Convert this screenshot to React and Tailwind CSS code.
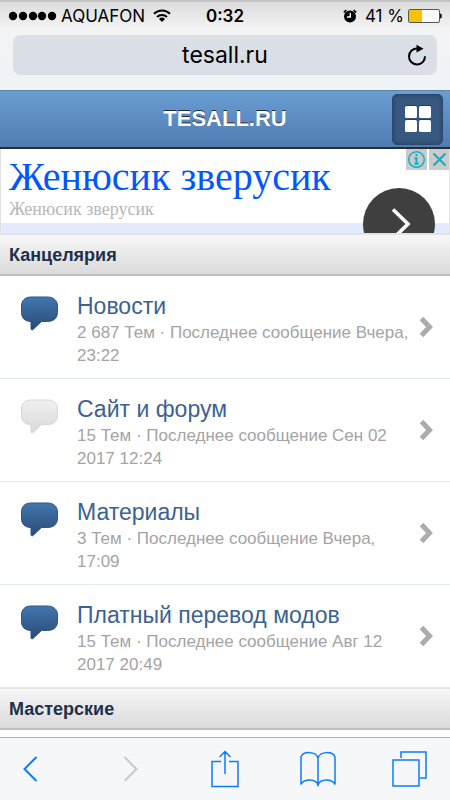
import React from "react";

const forums = [
  {
    title: "Новости",
    info: "2 687 Тем · Последнее сообщение Вчера, 23:22",
    unread: true,
  },
  {
    title: "Сайт и форум",
    info: "15 Тем · Последнее сообщение Сен 02 2017 12:24",
    unread: false,
  },
  {
    title: "Материалы",
    info: "3 Тем · Последнее сообщение Вчера, 17:09",
    unread: true,
  },
  {
    title: "Платный перевод модов",
    info: "15 Тем · Последнее сообщение Авг 12 2017 20:49",
    unread: true,
  },
];

const StatusBar = () => (
  <div className="grid grid-cols-[1fr_auto_1fr] items-center h-7 px-2">
    <div className="flex items-center">
      <svg width="49" height="10" viewBox="0 0 49 10">
        {[5, 15, 25, 34, 44].map((cx) => (
          <circle key={cx} cx={cx} cy="5" r="4.2" />
        ))}
      </svg>
      <span className="ml-1 text-[17px] leading-7">AQUAFON</span>
      <svg className="ml-2" width="18" height="14" viewBox="0 0 18 14" fill="none" stroke="#000" strokeWidth="2">
        <path d="M1 4.8a11.5 11.5 0 0 1 16 0M4 8a7.2 7.2 0 0 1 10 0" />
        <path d="M9 13 6 10a4.4 4.4 0 0 1 6 0z" fill="#000" stroke="none" />
      </svg>
    </div>
    <span className="text-[17px] leading-7 font-semibold">0:32</span>
    <div className="flex items-center justify-end">
      <svg width="14" height="14" viewBox="0 0 14 14">
        <circle cx="7" cy="7.5" r="6" />
        <path d="M0.8 3.4 3.4 1M13.2 3.4 10.6 1" stroke="#000" strokeWidth="1.6" />
        <path d="M7.3 3.8v4.2H4" fill="none" stroke="#fff" strokeWidth="1.3" />
      </svg>
      <span className="ml-2 text-[17px] leading-7 whitespace-nowrap">41 %</span>
      <svg className="ml-1" width="34" height="14" viewBox="0 0 34 14">
        <rect x="0.5" y="0.5" width="31" height="13" rx="1.5" fill="#fafafa" stroke="#555" />
        <rect x="1" y="1" width="13" height="12" fill="#f7c200" />
        <path d="M32 4.5c2.500 0 2.500 5 0 5z" />
      </svg>
    </div>
  </div>
);

const AddressBar = () => (
  <div className="flex items-center mx-[13px] mt-[5px] mb-[15px] h-10 rounded-lg bg-gradient-to-b from-[#dae0e4] to-[#d9dee8]">
    <input
      aria-label="Адрес"
      defaultValue="tesall.ru"
      className="w-full min-w-0 pl-10 bg-transparent text-center text-[23px] leading-8 outline-none"
    />
    <button aria-label="Обновить" className="shrink-0 w-10 flex justify-center">
      <svg width="20" height="22" viewBox="0 0 20 22">
        <path d="M10.5 4.5A8 8 0 1 0 18 12.3" fill="none" stroke="#000" strokeWidth="2" />
        <path d="m9.5 0.8 7 4-7 3.8z" />
      </svg>
    </button>
  </div>
);

const AdBanner = () => (
  <div className="relative h-[85px] overflow-hidden border-x border-b border-[#e2e2e2] bg-white font-['Liberation_Serif',serif]">
    <a href="#ad" className="block pl-2 pt-2">
      <span className="block text-[40px] leading-10 text-[#0057ff] whitespace-nowrap">
        Женюсик зверусик
      </span>
      <span className="block mt-[2px] text-[18px] leading-5 text-[#b8b8b8]">
        Женюсик зверусик
      </span>
    </a>
    <div className="absolute inset-x-0 bottom-0 h-[10px] bg-[#e3eafd]" />
    <button
      aria-label="Далее"
      className="absolute right-[14px] top-[39px] w-[72px] h-[72px] rounded-full bg-[#3f3f3f]"
    >
      <svg width="72" height="72" viewBox="0 0 72 72" fill="none" stroke="#fff" strokeWidth="3.6">
        <path d="m30 21.500 15 14.500-15 14.500" />
      </svg>
    </button>
    <div className="absolute -right-px top-0 flex gap-0.5">
      <button aria-label="О рекламе" className="w-[21px] h-[21px] bg-[#cbcbcb]">
        <svg width="21" height="21" viewBox="0 0 21 21" fill="none" stroke="#0fafca" strokeWidth="1.5">
          <circle cx="10.5" cy="10.5" r="7.8" />
          <path d="M10.5 5v2.2M8.5 9.2h2v5.5M8.5 14.8h4.2" strokeWidth="2" />
        </svg>
      </button>
      <button aria-label="Закрыть" className="w-[21px] h-[21px] bg-[#cbcbcb]">
        <svg width="21" height="21" viewBox="0 0 21 21" stroke="#0fafca" strokeWidth="2">
          <path d="m4.5 4.5 12 12M16.5 4.5l-12 12" />
        </svg>
      </button>
    </div>
  </div>
);

const SectionTitle = ({ children }) => (
  <h2 className="h-[42px] px-[9px] border-t border-b-2 border-t-[#e4e4e4] border-b-[#bfbfbf] bg-gradient-to-b from-[#f7f7f7] to-[#dadada] text-[18px] leading-10 font-bold text-[#1d3049]">
    {children}
  </h2>
);

const Bubble = ({ unread }) => (
  <svg className="shrink-0 mt-5" width="38" height="35" viewBox="0 0 38 35">
    <defs>
      <linearGradient id="bubble-on" x1="0" y1="0" x2="0" y2="1">
        <stop offset="0" stopColor="#4277ad" />
        <stop offset="1" stopColor="#2a4a78" />
      </linearGradient>
      <linearGradient id="bubble-off" x1="0" y1="0" x2="0" y2="1">
        <stop offset="0" stopColor="#f0f0f0" />
        <stop offset="1" stopColor="#d9d9d9" />
      </linearGradient>
    </defs>
    <path
      d="M11 1h16.500C34 1 37.500 5 37.500 10v6.500c0 5-3.500 9-10 9h-6L13 33.500c-1 .8-2 .4-2-1v-7C4.500 25.500 1.500 21.500 1.500 16.500V10C1.500 5 4.500 1 11 1z"
      fill={unread ? "url(#bubble-on)" : "url(#bubble-off)"}
      stroke={unread ? "#2f5583" : "#d6d6d6"}
      strokeWidth="1"
    />
  </svg>
);

const ForumRow = ({ forum }) => (
  <li className="border-b border-[#e2e6ee]">
    <a href="#forum" className="flex pl-5 pr-[17px] pb-[11px]">
      <Bubble unread={forum.unread} />
      <div className="flex-1 ml-[19px] pt-[15px]">
        <h3 className="text-[23px] leading-[30px] text-[#3b6292]">{forum.title}</h3>
        <p className="text-[17px] leading-[23px] text-[#a4a4a4]">{forum.info}</p>
      </div>
      <svg className="shrink-0 self-center mt-[11px]" width="14" height="22" viewBox="0 0 14 22" fill="none" stroke="#acacac" strokeWidth="5">
        <path d="m2.500 2.500 8 8.500-8 8.500" />
      </svg>
    </a>
  </li>
);

const Toolbar = () => (
  <nav className="sticky bottom-0 flex items-center justify-between h-[63px] px-[22px] border-t border-[#b2b2b2] bg-[#f6f7f8] text-[#0a7cff]">
    <button aria-label="Назад" className="w-9">
      <svg width="16" height="28" viewBox="0 0 16 28" fill="none" stroke="currentColor" strokeWidth="2">
        <path d="M14.5 2 2.5 14l12 12" />
      </svg>
    </button>
    <button aria-label="Вперёд" disabled className="w-9 flex pl-2 text-[#c9c9c9]">
      <svg width="16" height="28" viewBox="0 0 16 28" fill="none" stroke="currentColor" strokeWidth="2">
        <path d="m1.5 2 12 12-12 12" />
      </svg>
    </button>
    <button aria-label="Поделиться" className="w-9 flex justify-center">
      <svg width="28" height="38" viewBox="0 0 28 38" fill="none" stroke="currentColor" strokeWidth="1.5">
        <path d="M10 11.5H1v25h26v-25h-9M14 24V1.500M8.500 7l5.500-5.500L19.500 7" />
      </svg>
    </button>
    <button aria-label="Закладки" className="w-9">
      <svg width="36" height="36" viewBox="0 0 36 36" fill="none" stroke="currentColor" strokeWidth="1.5">
        <path d="M18 7C16 0 3 0 1 6v27.5c3-6 15-6 17 0.500 2-6.500 14-6.500 17-0.500V6C33 0 20 0 18 7zM18 7v28" />
      </svg>
    </button>
    <button aria-label="Вкладки" className="w-9">
      <svg width="36" height="36" viewBox="0 0 36 36" fill="none" stroke="currentColor" strokeWidth="1.5">
        <path d="M1 9h26v26H1zM9 7V1h25v26h-6" />
      </svg>
    </button>
  </nav>
);

export default function App() {
  return (
    <div className="min-h-screen flex flex-col bg-white font-['Liberation_Sans',Arial,sans-serif]">
      <div className="bg-gradient-to-b from-[#dcdcdd] via-[#f3f3f4] via-30% to-[#eef3f7] border-t-2 border-[#c4c4c5] text-black font-[Inter,sans-serif]">
        <StatusBar />
        <AddressBar />
      </div>

      <header className="grid grid-cols-[50px_1fr_50px] items-center h-[59px] px-[7px] border-t border-b-2 border-t-[#6583a3] border-b-[#262d35] bg-gradient-to-b from-[#699ed3] to-[#507bb1]">
        <h1 className="col-start-2 text-center text-[22px] leading-8 font-bold text-white [text-shadow:0_-1px_0_#1f2c3b]">
          TESALL.RU
        </h1>
        <button
          aria-label="Меню"
          className="flex items-center justify-center justify-self-end w-[51px] h-[51px] rounded-[5px] border border-[#2c486d] bg-[#37597f] shadow-[inset_0_0_4px_#233f63]"
        >
          <svg width="28" height="28" viewBox="0 0 28 28">
            <g fill="#24405f">
              <rect x="1" y="0" width="12" height="12" rx="1" />
              <rect x="15" y="0" width="12" height="12" rx="1" />
              <rect x="1" y="14" width="12" height="12" rx="1" />
              <rect x="15" y="14" width="12" height="12" rx="1" />
            </g>
            <g fill="#fff">
              <rect x="1" y="1" width="12" height="12" rx="1.500" />
              <rect x="15" y="1" width="12" height="12" rx="1.500" />
              <rect x="1" y="15" width="12" height="12" rx="1.500" />
              <rect x="15" y="15" width="12" height="12" rx="1.500" />
            </g>
          </svg>
        </button>
      </header>

      <main className="flex-1">
        <AdBanner />
        <SectionTitle>Канцелярия</SectionTitle>
        <ul>
          {forums.map((forum) => (
            <ForumRow key={forum.title} forum={forum} />
          ))}
        </ul>
        <SectionTitle>Мастерские</SectionTitle>
      </main>

      <Toolbar />
    </div>
  );
}
